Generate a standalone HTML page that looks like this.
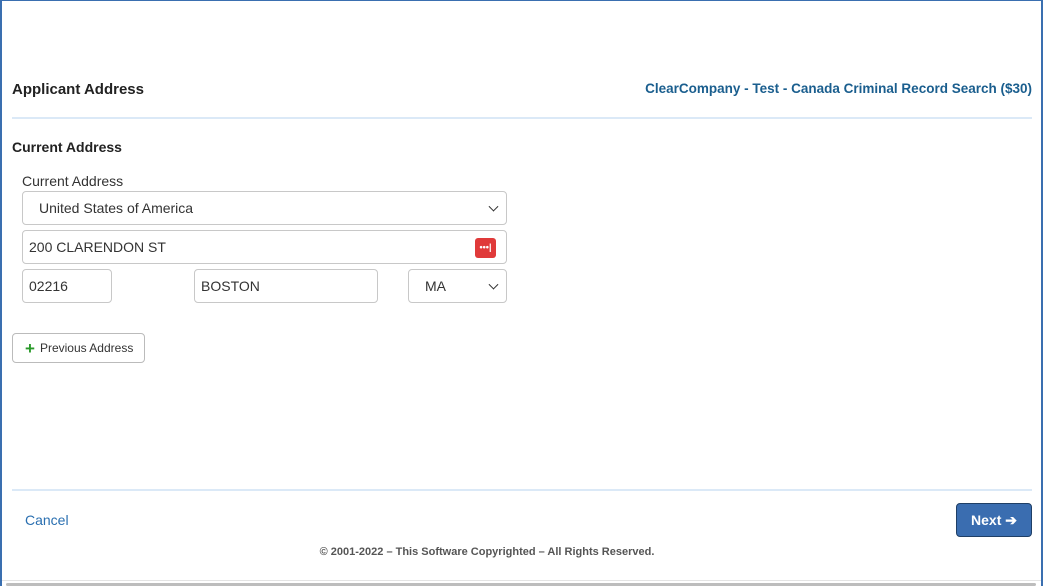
<!DOCTYPE html>
<html><head><meta charset="utf-8"><style>
*{box-sizing:border-box;margin:0;padding:0}
body{width:1043px;height:586px;overflow:hidden;background:#fff;font-family:"Liberation Sans",sans-serif;position:relative;color:#333}
.frame{position:absolute;left:0;top:0;width:1043px;height:586px;border-top:1px solid #3a6fb0;border-left:2px solid #3a6fb0;border-right:2px solid #3a6fb0}
.abs{position:absolute}
.inp{position:absolute;border:1px solid #c8c8c8;border-radius:4px;background:#fff;font-size:14px;color:#333;padding-left:6px;display:flex;align-items:center}
.sel:after{content:"";position:absolute;right:9px;top:50%;width:6px;height:6px;border-right:1.6px solid #333;border-bottom:1.6px solid #333;transform:translateY(-70%) rotate(45deg)}
</style></head><body>
<div class="frame"></div>
<div class="abs" style="left:12px;top:81px;font-size:15px;font-weight:bold;color:#222">Applicant Address</div>
<div class="abs" style="right:11px;top:81px;font-size:13.5px;font-weight:bold;color:#1a5e8e">ClearCompany - Test - Canada Criminal Record Search ($30)</div>
<div class="abs" style="left:12px;top:117px;width:1020px;height:2px;background:#dbe9f7"></div>
<div class="abs" style="left:12px;top:139px;font-size:14px;font-weight:bold;color:#222">Current Address</div>
<div class="abs" style="left:22px;top:173px;font-size:14px;color:#333">Current Address</div>
<div class="inp sel" style="left:22px;top:191px;width:485px;height:34px;padding-left:16px">United States of America</div>
<div class="inp" style="left:22px;top:230px;width:485px;height:34px">200 CLARENDON ST
<div class="abs" style="right:10px;top:7px;width:21px;height:20px;background:#e03a3a;border-radius:3px;color:#fff;font-size:9px;line-height:18px;text-align:center;font-weight:bold">•••|</div></div>
<div class="inp" style="left:22px;top:269px;width:90px;height:34px">02216</div>
<div class="inp" style="left:194px;top:269px;width:184px;height:34px">BOSTON</div>
<div class="inp sel" style="left:408px;top:269px;width:99px;height:34px;padding-left:16px">MA</div>
<div class="inp" style="left:12px;top:333px;width:133px;height:30px;font-size:12px;padding-left:12px;border-color:#bbb"><span style="color:#2a9a2a;font-weight:bold;font-size:17px;margin-right:5px;line-height:1">+</span>Previous Address</div>
<div class="abs" style="left:12px;top:489px;width:1020px;height:2px;background:#dbe9f7"></div>
<div class="abs" style="left:25px;top:512px;font-size:14px;color:#2a6fb0">Cancel</div>
<div class="abs" style="left:956px;top:503px;width:76px;height:34px;background:#3a6db0;border:1px solid #1f3f66;border-radius:4px;color:#fff;font-size:14px;font-weight:bold;text-align:center;line-height:32px">Next ➔</div>
<div class="abs" style="left:0;width:974px;top:546px;text-align:center;font-size:11px;font-weight:bold;color:#555">© 2001-2022 – This Software Copyrighted – All Rights Reserved.</div>
<div class="abs" style="left:2px;top:580px;width:1039px;height:1px;background:#e4e4e4"></div>
<div class="abs" style="left:6px;top:583px;width:1030px;height:3px;background:#bdbdbd;border-radius:2px"></div>
</body></html>
